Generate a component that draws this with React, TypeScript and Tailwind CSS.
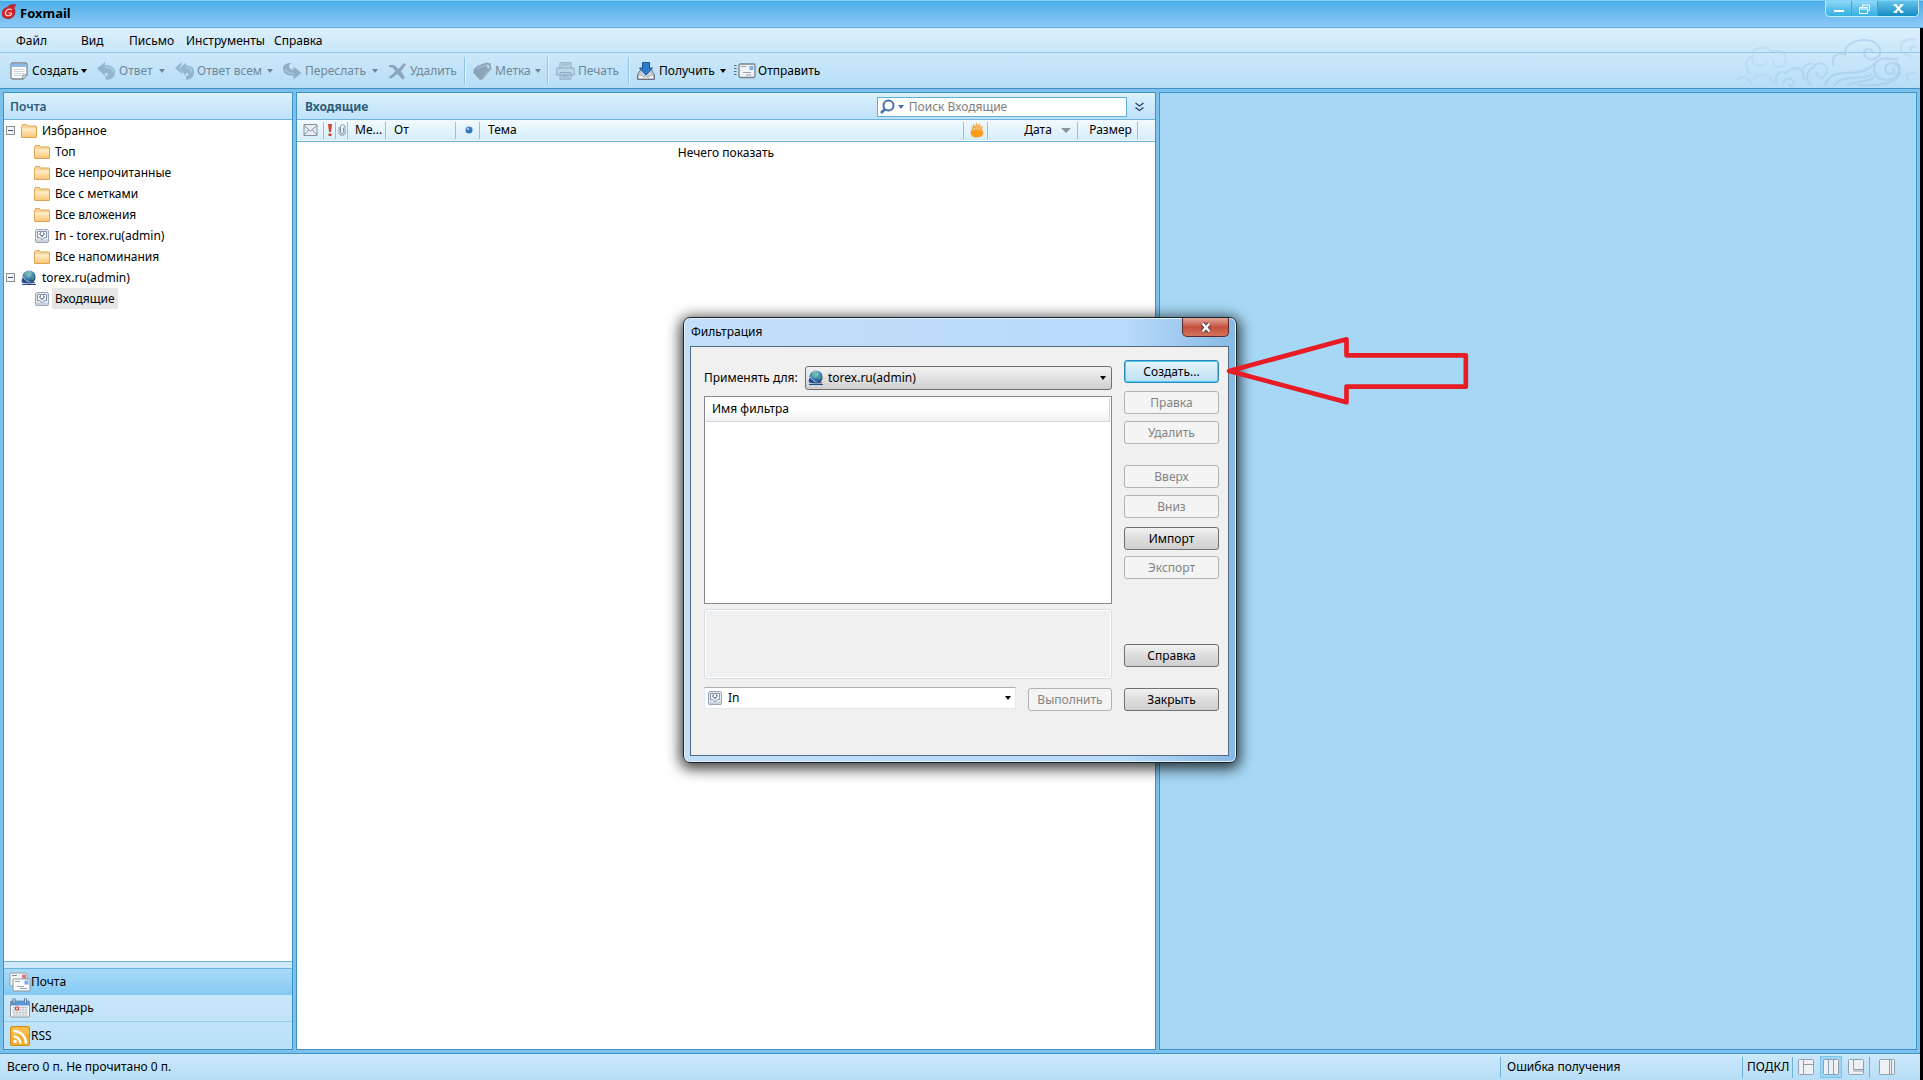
import type { ReactNode } from "react";
import clsx from "clsx";

const FolderIcon = () => (
  <svg width="16" height="16" viewBox="0 0 16 16" className="shrink-0">
    <defs>
      <linearGradient id="folder" x1="0" y1="0" x2="0" y2="1">
        <stop offset="0" stopColor="#fff0cf" />
        <stop offset="1" stopColor="#fbc675" />
      </linearGradient>
    </defs>
    <path d="M.5 14V3.5L1.500 1.500h4l1 1.500h8.500l.5 1V14Z" fill="#f6d59a" stroke="#dda754" />
    <path d="M1 5.500h14V14H1Z" fill="url(#folder)" />
    <path d="M.5 14.500h15" stroke="#d9a457" />
  </svg>
);

const InboxIcon = () => (
  <svg width="16" height="16" viewBox="0 0 16 16" className="shrink-0">
    <path d="M3 1.500h10l1.500 1v11l-.5 1H2l-.5-1v-11Z" fill="#e6ebf3" stroke="#9aa6b8" />
    <path d="M2 11.500h12v2.500H2Z" fill="#c9d2df" />
    <path
      d="M3.500 3.500H6.500V5.500H5.500V6.500H6.500V3.500H9.500V6.500H10.500V5.500H9.500V3.500H12.500V9.500H10.500L8 11.500 5.500 9.500H3.500Z"
      fill="#fff"
      stroke="#8291a8"
    />
    <path d="M5.500 7h5L8 9.500Z" fill="#8291a8" />
  </svg>
);

const GlobeIcon = () => (
  <svg width="16" height="16" viewBox="0 0 16 16" className="shrink-0">
    <defs>
      <radialGradient id="globe" cx=".45" cy=".25" r=".8">
        <stop offset="0" stopColor="#b9ecdf" />
        <stop offset=".45" stopColor="#3b87b8" />
        <stop offset="1" stopColor="#12305f" />
      </radialGradient>
    </defs>
    <circle cx="8" cy="7" r="6.600" fill="url(#globe)" />
    <path d="M5 3l3-1.500 1.500 2L7 6 4 6.500ZM10 6l3-1 .5 3-2.500 2.500Z" fill="#5da271" opacity=".6" />
    <path d="M2.500 7C0 9 0 11 1 13c3 1.200 7 1 9-.5C7 12 4.500 11 2.500 7Z" fill="#24468a" stroke="#e4eefb" strokeWidth=".8" />
    <path d="M1 14.500h14M6 12.800h8" stroke="#284a80" />
  </svg>
);

const NewIcon = () => (
  <svg width="18" height="18" viewBox="0 0 18 18">
    <path d="M2.500 1h13.500l1 1v11l-4 4H2.500l-1.500-1V2Z" fill="#fdfdfe" stroke="#7d8792" strokeWidth="1.300" />
    <path d="M2 2h14v3H2Z" fill="#8dbbe6" />
    <path d="M3.500 7.500h11M3.500 9.500h11M3.500 11.500h11M3.500 13.500h8" stroke="#c2c8ce" strokeWidth=".8" />
    <path d="M12.500 17l.5-4h4" fill="#e8ecef" stroke="#7d8792" />
  </svg>
);

const ReplyIcon = () => (
  <svg width="19" height="18" viewBox="0 0 19 18">
    <path d="M0 6.500 8 0v3c7 0 11 3.500 10 8.500-.5 3.500-3 5.500-8 6.500l-1.500-1v-3c4-.5 3.500-3-.5-3v3Z" fill="#93b6cf" />
    <path d="M7.500 5c5 0 9 1.500 8.500 5.500" fill="none" stroke="#a9c9df" strokeWidth="2" />
  </svg>
);

const ReplyAllIcon = () => (
  <svg width="19" height="18" viewBox="0 0 19 18">
    <path d="M0 6 6.500 0v3L4 6l3 3.500V12Z" fill="#93b6cf" />
    <path d="M4.500 6.500 11 .5v3c6 0 8.500 3 8 8-.5 3.500-2.500 5.500-7 6.500l-1-1v-3c3.500-.5 3-3 0-3v3Z" fill="#93b6cf" />
    <path d="M11 5.500c4 0 6 1.500 5.500 5" fill="none" stroke="#a9c9df" strokeWidth="1.800" />
  </svg>
);

const ForwardIcon = () => (
  <svg width="19" height="18" viewBox="0 0 19 18">
    <path d="M18.500 11 10.500 17.500v-4C3.500 14 0 11 0 6.500 0 3 3 .5 8.500 1 5.500 2 4.500 7.500 10.500 8V4.500Z" fill="#8fb0c7" />
    <path d="M2 7c1 4 5 4.500 9.500 4.500" fill="none" stroke="#a6c5da" strokeWidth="1.500" />
  </svg>
);

const DeleteIcon = () => (
  <svg width="19" height="18" viewBox="0 0 19 18">
    <path d="M1 3h5l4.500 4L16 1l2 1.500-5 7 4 6-2.500 2L9.500 12 3 16.500l-2.500-1 7-6L5 6 1 5Z" fill="#8ba6ba" />
  </svg>
);

const TagIcon = () => (
  <svg width="19" height="18" viewBox="0 0 19 18">
    <path d="M4 4 13.500.5l4 1L18.500 7 10 17l-3 1L0 10.500 1 7Z" fill="#8ba5b8" />
    <path d="M3.500 6.500 15 2.500l2 4.500-7 8" fill="none" stroke="#a9c2d4" />
    <circle cx="15" cy="4.500" r="1.200" fill="#c9e3f5" />
  </svg>
);

const PrintIcon = () => (
  <svg width="19" height="18" viewBox="0 0 19 18" fill="#b9d6e9" stroke="#8eaabf">
    <path d="M4 6V.8h11V6M1 6h17l.4 7H.6ZM4 10.500h11v6.700H4Z" />
    <path d="M6 3h7M6 13h7M6 15h7" />
  </svg>
);

const ReceiveIcon = () => (
  <svg width="18" height="18" viewBox="0 0 18 18">
    <path d="M3.500 8h11l3 5v4.500H.5V13Z" fill="#c6ccd3" stroke="#69727b" />
    <path d="M1.500 13.500h3.500l1 1.500h6l1-1.500h3.500V16.500h-15Z" fill="#fafafa" stroke="#99a1a9" strokeWidth=".6" />
    <path d="M5.500.5h7V6h3L9 13 2.500 6h3Z" fill="#2d7ccb" stroke="#1b5692" />
  </svg>
);

const SendIcon = () => (
  <svg width="22" height="16" viewBox="0 0 22 16">
    <rect x="5" y="1" width="16" height="13.500" rx="1.500" fill="#f2f3f5" stroke="#77818a" strokeWidth="1.300" />
    <path d="M0 2.500h3M0 5.500h3M0 8.500h3M0 11.500h3" stroke="#5e6a75" strokeDasharray="2 .5" />
    <path d="M7 3.500h5M9 9.500h8M12 12h5" stroke="#9aa2aa" />
    <path d="M15.500 3h4v4h-4Z" fill="#7daee6" />
  </svg>
);

const MailNavIcon = () => (
  <svg width="22" height="20" viewBox="0 0 22 20" className="shrink-0">
    <rect x="1" y="1" width="17" height="13" rx="1" fill="#f4f5f6" stroke="#9aa0a6" />
    <path d="M3 3.500h5" stroke="#888f96" />
    <path d="M13 2.500h4v4h-4Z" fill="#e07a78" />
    <rect x="4" y="7" width="17" height="12" rx="1" fill="#fafbfc" stroke="#8d949b" />
    <path d="M6 9.500h5M8 14.500h7M11 16.500h7" stroke="#9aa2aa" />
    <path d="M15.500 8.500h4v4h-4Z" fill="#7aa9ea" />
  </svg>
);

const CalendarNavIcon = () => (
  <svg width="22" height="20" viewBox="0 0 22 20" className="shrink-0">
    <rect x="1.500" y="3" width="19" height="16" rx="1" fill="#f8f8f8" stroke="#8f969d" />
    <path d="M1.500 3h19v4.500h-19Z" fill="#5d97d6" />
    <path d="M5 .5v5M16.500 .5v5" stroke="#44709f" strokeWidth="3" />
    <path d="M5 1v4M16.500 1v4" stroke="#dce8f4" strokeWidth="1.200" />
    <path d="M3.500 9.500h15M3.500 12h15M3.500 14.500h15M3.500 17h15M5 8.500v9M8 8.500v9M11 8.500v9M14 8.500v9M17 8.500v9" stroke="#b7bcc2" strokeWidth=".8" />
    <path d="M6.500 9h3v3h-3Z" fill="#f3c9c6" stroke="#cc4b45" />
  </svg>
);

const RssNavIcon = () => (
  <svg width="22" height="20" viewBox="0 0 22 20" className="shrink-0">
    <rect x="1.500" y=".5" width="19" height="19" rx="1.500" fill="#f3ae2e" stroke="#d18d1c" />
    <path d="M2.500 1.500h17v7h-17Z" fill="#fac85a" opacity=".7" />
    <circle cx="6" cy="15.500" r="1.800" fill="#fff" />
    <path d="M4.500 10.500a7 7 0 0 1 7 7M4.500 5A12.500 12.500 0 0 1 17 17.500" fill="none" stroke="#fff" strokeWidth="2.400" />
  </svg>
);

const Caret = ({ className = "fill-black" }: { className?: string }) => (
  <svg width="6" height="4" viewBox="0 0 6 4" className={clsx("shrink-0", className)}>
    <path d="M0 0h6L3 4Z" />
  </svg>
);

const Clouds = () => (
  <svg
    width="183"
    height="52"
    viewBox="0 15 549 156"
    className="pointer-events-none absolute right-0 top-[7px] opacity-50"
    fill="none"
    stroke="#9cc6ea"
    strokeWidth="6"
  >
    <path opacity=".5" d="M2 150c10-15 35-10 42 15M50 150c5-20 50-25 60 15M40 130c-20-20-15-45 5-50 0-35 50-35 60-12 30-15 55 15 35 35-15 15-35 5-30-12M45 80c-5 25 30 40 45 15" />
    <path opacity=".8" d="M118 165c-8-35 15-45 30-35 25-30 60-10 50 15M140 160c0-20 30-20 30 0 0 10-15 10-15 2M205 150c-20-35 5-60 30-45 25-15 45 10 30 30-10 15-30 5-25-10M225 165c-25-10-15-50 10-55" />
    <path d="M290 108c-10-30 15-45 35-35-8-50 100-60 105-10 0 30-45 35-50 5 5-15 25-15 28 2M265 165c20-60 90-20 130-50 20-15 30-35 60-28M290 168c30-40 80-15 115-35M330 168c25-20 60-5 85-30M430 85c-35 30-15 65 20 65 45-5 45-55 10-50-20 5-20 30 0 32 15 0 15-15 5-15M360 165c60 5 125-5 130-40 0-15-5-25-15-30M445 82c10 8 20 5 40 5" />
    <path opacity=".6" d="M535 30c-30-10-55 15-40 35 10 15 30 5 25 20M535 55c-10-10-20 0-10 8M535 130c-20-5-35 10-20 20" />
  </svg>
);

type ToolProps = { icon: ReactNode; label: string; caret?: boolean; tight?: boolean; disabled?: boolean; width: string };

const Tool = ({ icon, label, caret, tight, disabled, width }: ToolProps) => (
  <button
    type="button"
    disabled={disabled}
    className={clsx("flex h-7 shrink-0 items-center", width, disabled ? "text-[#6f8797]" : "text-black")}
  >
    <span className="mr-[2px] flex w-[22px] shrink-0 justify-center">{icon}</span>
    <span className="flex-1 whitespace-nowrap text-left">{label}</span>
    {caret && <Caret className={clsx(tight ? "mr-[6px]" : "mr-2", disabled ? "fill-[#6f8797]" : "fill-black")} />}
  </button>
);

const ToolDivider = () => <span className="mr-[5px] h-[27px] w-[2px] shrink-0 border-l border-r border-l-[#8fc4e6] border-r-[#dff2fd]" />;

const WindowControls = () => (
  <div className="mr-1 flex h-4 overflow-hidden rounded-b-[5px] border border-t-0 border-[#c3ecfb] bg-linear-to-b from-[#8fd9f6] via-[#5cc1ec] via-50% to-[#35b0e2]">
    <button type="button" aria-label="Свернуть" className="flex w-[26px] items-end justify-center border-r border-[#3ba4d4] pb-1">
      <span className="h-[2px] w-[10px] bg-white" />
    </button>
    <button type="button" aria-label="Восстановить" className="flex w-[26px] items-center justify-center border-r border-[#3ba4d4]">
      <svg width="11" height="10" viewBox="0 0 11 10" fill="none" stroke="#fff">
        <path d="M3.500 3V1h7v5.500H8.500M.5 3.500h8v6h-8ZM.5 5h8" />
      </svg>
    </button>
    <button type="button" aria-label="Закрыть окно" className="flex w-10 items-center justify-center bg-linear-to-b from-[#62c4ea] to-[#0a8cc4]">
      <svg width="11" height="9" viewBox="0 0 11 9" stroke="#fff" strokeWidth="2.200">
        <path d="M2 .5l7 8M9 .5l-7 8" />
        <path d="M.5 1h3.500M7 1h3.500M.5 8h3.500M7 8h3.500" strokeWidth="1.500" />
      </svg>
    </button>
  </div>
);

const tree = [
  { label: "Избранное", icon: <FolderIcon />, root: true },
  { label: "Топ", icon: <FolderIcon /> },
  { label: "Все непрочитанные", icon: <FolderIcon /> },
  { label: "Все с метками", icon: <FolderIcon /> },
  { label: "Все вложения", icon: <FolderIcon /> },
  { label: "In - torex.ru(admin)", icon: <InboxIcon /> },
  { label: "Все напоминания", icon: <FolderIcon /> },
  { label: "torex.ru(admin)", icon: <GlobeIcon />, root: true },
  { label: "Входящие", icon: <InboxIcon />, selected: true },
];

const panelHeader = "flex h-[27px] shrink-0 items-center border-b border-[#6db3dd] bg-linear-to-b from-[#dbf0fc] to-[#bde2f8] pt-px font-bold text-[#2c5d7c]";

const Sidebar = () => (
  <aside className="flex w-[290px] shrink-0 flex-col border border-[#3f92c4] bg-white">
    <h2 className={clsx(panelHeader, "px-[6px] font-semibold")}>Почта</h2>
    <ul className="flex-1">
      {tree.map((item) => (
        <li key={item.label} className={clsx("flex h-[21px] items-center", item.root ? "pl-[2px]" : "pl-[30px]")}>
          {item.root && (
            <button type="button" aria-label="Свернуть ветку" className="mr-[6px] flex size-[9px] items-center justify-center border border-[#8a8f94] bg-[#f6f6f6]">
              <span className="h-px w-[5px] bg-[#3a4a86]" />
            </button>
          )}
          {item.icon}
          <span className={clsx("ml-[2px] whitespace-nowrap px-[3px] leading-[21px]", item.selected && "bg-[#e6e6e6]")}>{item.label}</span>
        </li>
      ))}
    </ul>
    <nav className="border-t border-[#6db3dd] bg-linear-to-b from-[#d0eafb] to-[#b9e0f7] pt-[6px]">
      <a href="#mail" className="flex h-[27px] items-center border-t border-[#6db3dd] bg-linear-to-b from-[#a8daf8] to-[#83c9f2] pl-[5px]">
        <MailNavIcon />
        Почта
      </a>
      <a href="#calendar" className="flex h-[27px] items-center border-b border-[#93cbee] pl-[5px]">
        <CalendarNavIcon />
        Календарь
      </a>
      <a href="#rss" className="flex h-[27px] items-center pl-[5px]">
        <RssNavIcon />
        RSS
      </a>
    </nav>
  </aside>
);

const Th = ({ children, className }: { children?: ReactNode; className?: string }) => (
  <th className={clsx("h-[21px] overflow-hidden whitespace-nowrap p-0 font-normal", className)}>
    <div className="flex h-[17px] items-center border-r border-[#8cc4e6]">{children}</div>
  </th>
);

const MailList = () => (
  <main className="ml-[3px] flex min-w-0 flex-[861] flex-col border border-[#3f92c4] bg-white">
    <div className={clsx(panelHeader, "pl-2")}>
      <h2 className="flex-1">Входящие</h2>
      <div className="flex h-5 w-[250px] items-center border border-[#62aedb] bg-white font-normal">
        <svg width="15" height="15" viewBox="0 0 15 15" className="ml-[2px]" fill="none" stroke="#4470ad">
          <circle cx="8.500" cy="6.500" r="5" strokeWidth="2" />
          <path d="M5 10 1 14" strokeWidth="2.500" />
        </svg>
        <Caret className="ml-[3px] fill-[#4470ad]" />
        <input aria-label="Поиск" placeholder="Поиск Входящие" className="ml-[5px] min-w-0 flex-1 text-black outline-none placeholder:text-[#7d7d7d]" />
      </div>
      <button type="button" aria-label="Развернуть поиск" className="ml-2 mr-[11px]">
        <svg width="9" height="10" viewBox="0 0 9 10" fill="none" stroke="#1f4467" strokeWidth="1.300">
          <path d="M.5 1l4 3 4-3M.5 5.500l4 3 4-3" />
        </svg>
      </button>
    </div>
    <table className="w-full table-fixed border-collapse">
      <colgroup>
        <col className="w-[27px]" />
        <col className="w-[12px]" />
        <col className="w-[12px]" />
        <col className="w-[38px]" />
        <col className="w-[70px]" />
        <col className="w-[24px]" />
        <col />
        <col className="w-[24px]" />
        <col className="w-[90px]" />
        <col className="w-[60px]" />
        <col className="w-[17px]" />
      </colgroup>
      <thead className="border-b border-[#6db3dd] bg-linear-to-b from-[#f2faff] to-[#d6edfb]">
        <tr>
          <Th>
            <svg width="15" height="12" viewBox="0 0 15 12" className="ml-[6px]" fill="#e9edf3" stroke="#8391a3">
              <path d="M1 .5h13v11H1Z" />
              <path d="M1 1.500 7.500 7 14 1.500M1 11l4.500-5M14 11 9.500 6" fill="none" />
            </svg>
          </Th>
          <Th>
            <svg width="6" height="12" viewBox="0 0 6 12" className="ml-[3px]" fill="#d6402f">
              <path d="M1 0h4L4 8H2ZM1.500 9.500h3V12h-3Z" />
            </svg>
          </Th>
          <Th>
            <svg width="8" height="12" viewBox="0 0 8 12" className="ml-[2px]" fill="none" stroke="#8492a4">
              <path d="M1 3v6c0 3 6 3 6 0V3C7 0 2.500 0 2.500 3v5.500c0 1.500 3 1.500 3 0V3.500" />
            </svg>
          </Th>
          <Th><span className="pl-[7px]">Ме...</span></Th>
          <Th><span className="pl-2">От</span></Th>
          <Th>
            <svg width="8" height="8" viewBox="0 0 8 8" className="ml-[9px]">
              <circle cx="4" cy="4" r="3.500" fill="#3a78c0" />
              <circle cx="3" cy="2.800" r="1.300" fill="#9cc6f0" />
            </svg>
          </Th>
          <Th><span className="pl-2">Тема</span></Th>
          <Th>
            <svg width="14" height="16" viewBox="0 0 14 16" className="ml-[6px]">
              <path d="M1 2.500 3 6 3 1.500 5.500 4.500 6 0 8 3.500 10.500 1 10 5 13 3.500l-1 4c2.500 3 2 8-5 8S-.5 10 2 7Z" fill="#f5a94a" />
              <path d="M1 9.500 3 8.500l1.500 1L6 7.500l1.500 2L9.500 8l1 1.500 2.500-.5c1 3.500-2 6-6 6s-7-2-6-5.500Z" fill="#fb9a15" />
              <path d="M4.500 6v2M7 4.500V7M9.500 5.500v2" stroke="#fde3b0" strokeWidth=".8" />
            </svg>
          </Th>
          <Th>
            <span className="flex-1 text-right">Дата</span>
            <svg width="10" height="5" viewBox="0 0 10 5" className="ml-[9px] mr-[6px]" fill="#8b949c">
              <path d="M0 0h10L5 5Z" />
            </svg>
          </Th>
          <Th><span className="flex-1 pr-[5px] text-right">Размер</span></Th>
          <th className="p-0" />
        </tr>
      </thead>
      <tbody>
        <tr>
          <td colSpan={11} className="h-6 p-0 text-center">Нечего показать</td>
        </tr>
      </tbody>
    </table>
  </main>
);

const dialogButton = {
  normal: "border-[#707070] bg-linear-to-b from-[#f2f2f2] via-[#dddddd] via-50% to-[#cfcfcf] text-black",
  focus: "border-[#2c88b8] bg-linear-to-b from-[#e8f5fc] to-[#b9dff2] text-black shadow-[inset_0_0_0_1px_#4ccbf5]",
  disabled: "border-[#adb2b5] bg-[#f4f4f4] text-[#838383]",
};

const DialogButton = ({ children, kind = "normal", className }: { children: ReactNode; kind?: keyof typeof dialogButton; className?: string }) => (
  <button type="button" disabled={kind === "disabled"} className={clsx("h-[23px] shrink-0 rounded-[3px] border leading-[21px]", dialogButton[kind], className)}>
    {children}
  </button>
);

const FilterDialog = () => (
  <section
    role="dialog"
    aria-label="Фильтрация"
    className="relative flex w-[554px] flex-col rounded-[7px] border border-[#16222e] bg-linear-to-r from-[#c2dffa] via-[#b8dafb] via-80% to-[#86bae4] pb-[6px] pl-[6px] pr-[7px] shadow-[0_3px_14px_3px_rgba(0,0,0,0.75),inset_0_0_0_1px_#e6f3ff]"
  >
    <header className="flex h-[28px] justify-between">
      <h2 className="pl-px leading-[28px]">Фильтрация</h2>
      <button
        type="button"
        aria-label="Закрыть диалог"
        className="flex h-[19px] w-[47px] items-center justify-center rounded-b-[5px] border border-t-0 border-[#5a2a2c] bg-linear-to-b from-[#e2a79c] via-[#c4503c] via-50% to-[#d3735c]"
      >
        <svg width="12" height="11" viewBox="0 0 12 11" fill="none">
          <path d="M2.500 1.500l7 8M9.500 1.500l-7 8" stroke="#5b3a40" strokeWidth="4.500" />
          <path d="M2.500 1.500l7 8M9.500 1.500l-7 8" stroke="#fff" strokeWidth="2.500" />
        </svg>
      </button>
    </header>
    <div className="flex h-[410px] gap-3 border border-[#54697f] bg-[#f0f0f0] pl-[13px] pr-[9px] pt-[13px]">
      <div className="flex min-w-0 flex-1 flex-col">
        <div className="mt-[6px] flex items-center justify-between">
          <label htmlFor="account">Применять для:</label>
          <div className="relative flex h-[24px] w-[307px] items-center rounded-[3px] border border-[#707070] bg-linear-to-b from-[#f2f2f2] via-[#e2e2e2] via-50% to-[#cfcfcf]">
            <span className="absolute left-[2px]"><GlobeIcon /></span>
            <select id="account" className="w-full appearance-none bg-transparent pl-[22px] outline-none">
              <option>torex.ru(admin)</option>
            </select>
            <Caret className="absolute right-[5px] fill-black" />
          </div>
        </div>
        <div className="mt-[6px] h-[208px] border border-[#828790] bg-white p-px">
          <table className="w-full border-collapse">
            <thead>
              <tr>
                <th className="h-[23px] border-b border-r border-[#d5d5d5] bg-linear-to-b from-white from-45% to-[#f1f2f4] p-0 pl-[6px] text-left font-normal">Имя фильтра</th>
              </tr>
            </thead>
          </table>
        </div>
        <div className="mt-[5px] h-[70px] rounded-[3px] border border-[#d5dfe5] shadow-[inset_0_0_0_1px_#fff]" />
        <div className="mt-[8px] flex items-start justify-between">
          <div className="relative flex h-[22px] w-[312px] items-center border border-[#e3e9ef] border-t-[#abadb3] bg-white">
            <span className="absolute left-[2px]"><InboxIcon /></span>
            <select aria-label="Папка" className="w-full appearance-none bg-transparent pl-[23px] outline-none">
              <option>In</option>
            </select>
            <Caret className="absolute right-[4px] fill-black" />
          </div>
          <DialogButton kind="disabled" className="mt-px w-[84px]">Выполнить</DialogButton>
        </div>
      </div>
      <div className="flex w-[95px] flex-col">
        <DialogButton kind="focus">Создать...</DialogButton>
        <DialogButton kind="disabled" className="mt-2">Правка</DialogButton>
        <DialogButton kind="disabled" className="mt-[7px]">Удалить</DialogButton>
        <DialogButton kind="disabled" className="mt-[21px]">Вверх</DialogButton>
        <DialogButton kind="disabled" className="mt-[7px]">Вниз</DialogButton>
        <DialogButton className="mt-[9px]">Импорт</DialogButton>
        <DialogButton kind="disabled" className="mt-[6px]">Экспорт</DialogButton>
        <DialogButton className="mt-[65px]">Справка</DialogButton>
        <DialogButton className="mt-[21px]">Закрыть</DialogButton>
      </div>
    </div>
    <svg width="247" height="70" viewBox="700 90 740 210" className="absolute -right-[234px] top-[17px]" fill="none" stroke="#e81c24" strokeWidth="14">
      <path d="M718 198 1070 103V151H1428V245H1070V292Z" strokeLinejoin="round" />
    </svg>
  </section>
);

const LayoutButton = ({ d, active, label }: { d: string; active?: boolean; label: string }) => (
  <button
    type="button"
    aria-label={label}
    className={clsx("flex h-[22px] w-[22px] items-center justify-center border", active ? "border-[#7cc3ec] bg-[#9dd5f5]" : "border-transparent")}
  >
    <svg width="16" height="16" viewBox="0 0 16 16" fill="#eef0f4" stroke="#8e9fb2">
      <rect x=".5" y=".5" width="15" height="15" rx="1" />
      <path d={d} fill="none" />
    </svg>
  </button>
);

const StatusDivider = () => <span className="h-[21px] w-px bg-[#6db3dd]" />;

export default function App() {
  return (
    <div className="relative flex min-h-screen flex-col overflow-hidden bg-black font-['Noto_Sans','Open_Sans',sans-serif] text-[12px] leading-[18px] text-black">
      <header className="flex h-7 shrink-0 items-start border-b border-t border-b-[#5aa9d8] border-t-[#7fd3fb] bg-linear-to-b from-[#4aacea] to-[#8ccaf6]">
        <svg width="14" height="15" viewBox="0 0 14 15" className="ml-[2px] mt-[3px]">
          <path d="M6 3C8 0 11 1 13.500.5 13 2 12 3.500 12 4.500 14 7 13 13 8 14.500 3 15 0 13 0 9.500 0 6 3 4 6 3Z" fill="#dc1f27" stroke="#8d1218" strokeWidth=".6" />
          <path d="M10 5.500C6 4 3 7 3.500 10c1 3 6 2 6-1H6.500" fill="none" stroke="#ffd7d2" strokeWidth="1.200" />
        </svg>
        <h1 className="ml-1 flex-1 text-[13px] font-bold leading-[25px]">Foxmail</h1>
        <WindowControls />
      </header>

      <div className="mr-[3px] flex flex-1 flex-col bg-[#7cc0ee]">
        <div className="relative shrink-0">
          <nav className="flex h-[25px] items-center border-b border-[#93cbee] bg-linear-to-b from-[#dcf0fc] to-[#c9e6f9] pt-[2px]">
            <a href="#file" className="w-[65px] pl-4">Файл</a>
            <a href="#view" className="w-12 pl-4">Вид</a>
            <a href="#letter" className="w-[57px] pl-4">Письмо</a>
            <a href="#tools" className="w-[88px] pl-4">Инструменты</a>
            <a href="#help" className="pl-4">Справка</a>
          </nav>
          <div className="flex h-9 items-center border-b border-[#3f92c4] bg-linear-to-b from-[#cce8fa] to-[#b6def6] pl-2">
            <Tool icon={<NewIcon />} label="Создать" caret width="w-[87px]" />
            <Tool icon={<ReplyIcon />} label="Ответ" caret disabled width="w-[78px]" />
            <Tool icon={<ReplyAllIcon />} label="Ответ всем" caret disabled width="w-[108px]" />
            <Tool icon={<ForwardIcon />} label="Переслать" caret disabled width="w-[105px]" />
            <Tool icon={<DeleteIcon />} label="Удалить" disabled width="w-[78px]" />
            <ToolDivider />
            <Tool icon={<TagIcon />} label="Метка" caret tight disabled width="w-[76px]" />
            <ToolDivider />
            <Tool icon={<PrintIcon />} label="Печать" disabled width="w-[74px]" />
            <ToolDivider />
            <Tool icon={<ReceiveIcon />} label="Получить" caret width="w-[99px]" />
            <Tool icon={<SendIcon />} label="Отправить" width="w-[100px]" />
          </div>
          <Clouds />
        </div>

        <div className="flex flex-1 px-[3px] pb-[3px] pt-[3px]">
          <Sidebar />
          <MailList />
          <section aria-label="Просмотр письма" className="ml-[3px] flex-[759] border border-[#3f92c4] bg-[#a6d8f5]" />
        </div>

        <footer className="flex h-[27px] shrink-0 items-center border-t border-[#3f92c4] bg-linear-to-b from-[#cce8fa] to-[#b6def6] pl-[7px]">
          <span className="flex-1">Всего 0 п. Не прочитано 0 п.</span>
          <StatusDivider />
          <span className="w-[241px] pl-[6px]">Ошибка получения</span>
          <StatusDivider />
          <span className="w-[49px] pl-1">ПОДКЛ</span>
          <StatusDivider />
          <div className="mx-[2px] flex gap-[3px]">
            <LayoutButton label="Сетка" d="M5.500 1v14M5.500 5.500h9.500" />
            <LayoutButton label="Три колонки" active d="M5.500 1v14M10.500 1v14" />
            <LayoutButton label="Чтение снизу" d="M5.500 1v9.500h9.500M5.500 12h9.500" />
          </div>
          <StatusDivider />
          <div className="ml-[6px] mr-[22px]">
            <LayoutButton label="Боковая панель" d="M10.500 1v14M12.500 1v14" />
          </div>
        </footer>
      </div>

      <div className="absolute inset-0 right-[3px] flex items-center justify-center">
        <FilterDialog />
      </div>
    </div>
  );
}
